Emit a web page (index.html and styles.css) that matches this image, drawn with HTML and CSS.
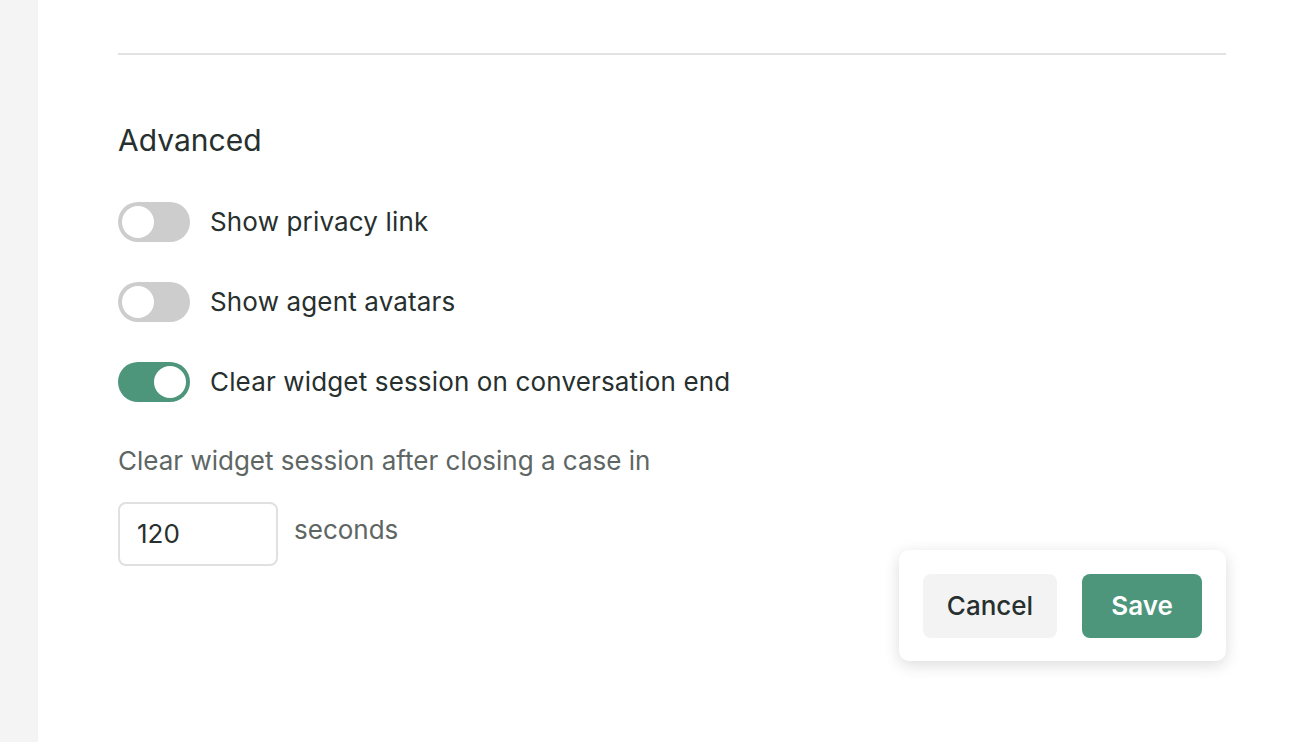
FILE: index.html
```html
<!DOCTYPE html>
<html>
<head>
<meta charset="utf-8">
<link rel="stylesheet" href="styles.css">
</head>
<body>
<div class="app">
  <aside class="sidebar"></aside>
  <main class="main">
    <hr class="divider">
    <h2 class="heading">Advanced</h2>
    <div class="toggles">
      <label class="row"><span class="switch"><span class="knob"></span></span><span class="label">Show privacy link</span></label>
      <label class="row"><span class="switch"><span class="knob"></span></span><span class="label">Show agent avatars</span></label>
      <label class="row"><span class="switch on"><span class="knob"></span></span><span class="label">Clear widget session on conversation end</span></label>
    </div>
    <p class="hint">Clear widget session after closing a case in</p>
    <div class="field">
      <div class="input">120</div>
      <span class="unit">seconds</span>
    </div>
    <div class="actions">
      <button class="btn cancel">Cancel</button>
      <button class="btn save">Save</button>
    </div>
  </main>
</div>
</body>
</html>
```

FILE: styles.css
```css
* { box-sizing: border-box; }
html, body { margin: 0; height: 100%; background: #fff; }
body { font-family: "Inter", "Open Sans", sans-serif; color: #2b3533; }
.app { display: flex; height: 742px; }
.sidebar { width: 38px; background: #f4f4f4; flex: none; }
.main { flex: 1; padding: 0 84px 0 80px; position: relative; }
.divider { margin: 53px 0 0; border: 0; height: 2px; background: #e2e2e2; }
.heading { margin: 67px 0 0; font-size: 30px; font-weight: 400; line-height: 36px; color: #27302e; }
.toggles { margin-top: 44px; display: flex; flex-direction: column; gap: 40px; }
.row { display: flex; align-items: center; gap: 20px; height: 40px; }
.switch { width: 72px; height: 40px; border-radius: 20px; background: #cdcdcd; position: relative; flex: none; }
.knob { position: absolute; top: 4px; left: 4px; width: 32px; height: 32px; border-radius: 50%; background: #fff; }
.switch.on { background: #4d967b; }
.switch.on .knob { left: 36px; }
.label { font-size: 26px; line-height: 36px; letter-spacing: 0.15px; color: #27302e; }
.hint { margin: 42px 0 0; font-size: 26px; line-height: 34px; color: #5e6664; }
.field { margin-top: 24px; display: flex; align-items: flex-start; gap: 16px; }
.input { width: 160px; height: 64px; border: 2px solid #e0e0e0; border-radius: 8px; padding: 0 17px; font-size: 26px; line-height: 60px; color: #27302e; }
.unit { font-size: 26px; color: #5e6664; line-height: 56px; }
.actions { position: absolute; left: 861px; top: 550px; width: 327px; height: 111px; background: #fff; border-radius: 10px; box-shadow: 0 4px 16px rgba(0,0,0,0.14); display: flex; align-items: center; gap: 25px; padding: 0 24px; }
.btn { height: 64px; border: 0; border-radius: 8px; font-family: inherit; font-size: 26px; padding: 0; }
.cancel { width: 134px; background: #f3f3f3; color: #27302e; font-weight: 500; }
.save { width: 120px; background: #4d967b; color: #fff; font-weight: 600; }
```
